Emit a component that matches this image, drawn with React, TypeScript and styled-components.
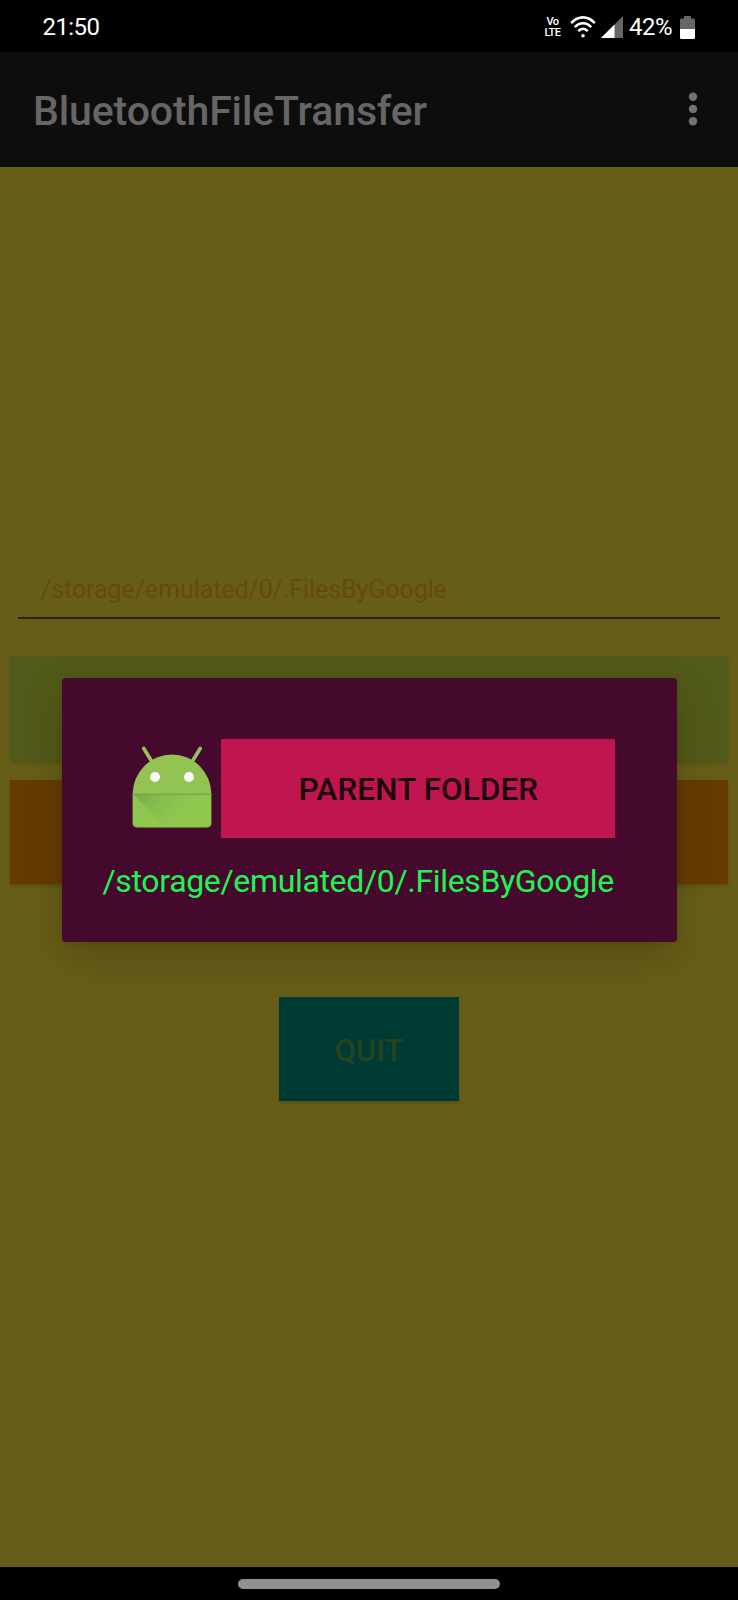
import React from "react";
import styled, { createGlobalStyle } from "styled-components";

const GlobalStyle = createGlobalStyle`
  *, *::before, *::after { box-sizing: border-box; }
  body { margin: 0; background: #000; font-family: Roboto, "Liberation Sans", sans-serif; }
`;

const Screen = styled.div`
  position: relative;
  display: flex;
  flex-direction: column;
  width: 738px;
  height: 1600px;
  overflow: hidden;
  background: #000;
`;

const StatusBar = styled.header`
  display: flex;
  align-items: center;
  justify-content: space-between;
  height: 52px;
  padding: 2px 43px 0 42.5px;
  color: #fff;
  font-size: 24px;
  line-height: 28px;
`;

const Clock = styled.time`
  letter-spacing: -0.6px;
`;

const StatusIcons = styled.div`
  display: flex;
  align-items: center;
`;

const VoLte = styled.div`
  display: flex;
  flex-direction: column;
  align-items: center;
  width: 17px;
  margin-right: 8px;
  font-size: 11px;
  font-weight: 500;
  letter-spacing: -0.5px;
  line-height: 11px;
`;

const Signal = styled.div`
  display: flex;
  margin-left: 4px;
`;

const BatteryLevel = styled.span`
  margin: 0 8px 0 6px;
  letter-spacing: -0.5px;
`;

const AppBar = styled.div`
  display: flex;
  align-items: center;
  justify-content: space-between;
  height: 115px;
  padding: 2px 40px 0 33px;
  background: #0d0d0d;
`;

const Title = styled.h1`
  margin: 0;
  color: #666;
  font-size: 41px;
  font-weight: 500;
  letter-spacing: -0.12px;
  line-height: 48px;
`;

const MenuButton = styled.button`
  display: flex;
  margin: -3px 0 0;
  padding: 0;
  border: 0;
  background: none;
`;

const Content = styled.main`
  display: flex;
  flex-direction: column;
  align-items: center;
  height: 1400px;
  padding: 393px 10px 0;
  background: #665e18;
`;

const PathField = styled.div`
  width: 702px;
  height: 59px;
  padding: 15px 23px 0;
  border-bottom: 2px solid #292609;
  color: #664a08;
  font-size: 25.2px;
  letter-spacing: -0.17px;
  line-height: 30px;
`;

const ActionButton = styled.button<{ $color: string; $top: number; $width: number; $height?: number }>`
  flex: none;
  width: ${(p) => p.$width}px;
  height: ${(p) => p.$height ?? 104}px;
  margin: ${(p) => p.$top}px 0 0;
  padding: 3px 0 0;
  border: 0;
  background: ${(p) => p.$color};
  box-shadow: 0 2px 4px rgba(0, 0, 0, 0.17);
  color: #24441e;
  font: 500 30.75px/36px Roboto, sans-serif;
`;

const Dialog = styled.section`
  position: absolute;
  top: 677.5px;
  left: 61.5px;
  display: flex;
  flex-direction: column;
  width: 615px;
  height: 264px;
  padding: 61.5px 61.5px 0 41px;
  border-radius: 4px;
  background: #45092d;
  box-shadow: 0 16px 40px rgba(0, 0, 0, 0.19), 0 0 6px rgba(0, 0, 0, 0.08);
`;

const FolderRow = styled.div`
  display: flex;
  justify-content: flex-end;
  height: 99px;
`;

const ParentButton = styled.button`
  width: 394px;
  height: 99px;
  margin-left: 9px;
  padding: 3px 0 0 1px;
  border: 0;
  background: #bf1650;
  color: #1c020b;
  font: 500 31.3px/36px Roboto, sans-serif;
  letter-spacing: 0.18px;
`;

const FolderPath = styled.p`
  margin: 25px 0 0;
  color: #1ef552;
  font-size: 32px;
  letter-spacing: -0.34px;
  line-height: 37px;
  white-space: nowrap;
`;

const NavBar = styled.footer`
  display: flex;
  justify-content: center;
  height: 33px;
  padding-top: 12px;
`;

const Handle = styled.div`
  width: 262px;
  height: 10px;
  border-radius: 5px;
  background: #919191;
`;

const WifiIcon = () => (
  <svg width="28" height="24" viewBox="-1 0 28 24" fill="none" stroke="#fff" strokeWidth="2.6">
    <path d="M1.200 8.200C8 .4 18 .4 24.800 8.200M4.800 12.200c4.800-5.200 11.600-5.200 16.400 0M8.300 16.100c2.800-3.100 6.600-3.100 9.400 0" />
    <circle cx="13" cy="20.800" r="1.800" fill="#fff" stroke="none" />
  </svg>
);

const SignalIcon = () => (
  <svg width="22" height="22" viewBox="0 0 22 22">
    <path d="M0 22 22 0v22z" fill="#666" />
    <path d="M0 22 13.500 8.500V22z" fill="#fff" />
  </svg>
);

const BatteryIcon = () => (
  <svg width="15" height="23" viewBox="0 0 15 23">
    <path d="M0 4q0-1.500 1.500-1.500H4V0h7v2.500h2.500Q15 2.500 15 4v9H0z" fill="#666" />
    <path d="M0 13h15v8.500q0 1.500-1.500 1.500h-12Q0 23 0 21.500z" fill="#fff" />
  </svg>
);

const MoreIcon = () => (
  <svg width="10" height="34" viewBox="0 0 10 34" fill="#737373">
    <circle cx="5" cy="4.700" r="4.200" />
    <circle cx="5" cy="17" r="4.200" />
    <circle cx="5" cy="29.300" r="4.200" />
  </svg>
);

const AndroidIcon = () => (
  <svg width="80" height="99" viewBox="0 0 80 99">
    <defs>
      <linearGradient id="bodyShade" x1="8" y1="56" x2="38" y2="86" gradientUnits="userSpaceOnUse">
        <stop stopColor="#4b7334" stopOpacity=".3" />
        <stop offset="1" stopColor="#78ad44" stopOpacity="0" />
      </linearGradient>
    </defs>
    <path d="M11.700 9.300 19.500 22M68.300 9.300 60.500 22" stroke="#97bf5d" strokeWidth="3.600" strokeLinecap="round" />
    <path d="M.6 55.300A39.400 39.800 0 0 1 79.400 55.300z" fill="#92c353" />
    <path d="M.6 55h78.800V84.300q0 4-4 4H4.600q-4 0-4-4z" fill="#8fc74f" />
    <path d="M1 55.300h60L50 88.300H33z" fill="url(#bodyShade)" />
    <path d="M.6 55.300h78.800" stroke="#719d45" strokeWidth="1.100" />
    <path d="M1 85.300q1 3 4 3h70q3 0 4-3" fill="none" stroke="#6d983e" strokeWidth=".8" />
    <circle cx="23" cy="38" r="5" fill="#fafafa" />
    <circle cx="57" cy="38" r="5" fill="#fafafa" />
  </svg>
);

export default function App() {
  return (
    <Screen>
      <GlobalStyle />
      <StatusBar>
        <Clock>21:50</Clock>
        <StatusIcons>
          <VoLte>
            <span>Vo</span>
            <span>LTE</span>
          </VoLte>
          <WifiIcon />
          <Signal>
            <SignalIcon />
          </Signal>
          <BatteryLevel>42%</BatteryLevel>
          <BatteryIcon />
        </StatusIcons>
      </StatusBar>
      <AppBar>
        <Title>BluetoothFileTransfer</Title>
        <MenuButton aria-label="More options">
          <MoreIcon />
        </MenuButton>
      </AppBar>
      <Content>
        <PathField>/storage/emulated/0/.FilesByGoogle</PathField>
        <ActionButton $color="#525a19" $top={37} $width={718} $height={105} />
        <ActionButton $color="#663b00" $top={19} $width={718} />
        <ActionButton $color="#003a34" $top={113} $width={180}>QUIT</ActionButton>
      </Content>
      <NavBar>
        <Handle />
      </NavBar>
      <Dialog role="dialog">
        <FolderRow>
          <AndroidIcon />
          <ParentButton>PARENT FOLDER</ParentButton>
        </FolderRow>
        <FolderPath>/storage/emulated/0/.FilesByGoogle</FolderPath>
      </Dialog>
    </Screen>
  );
}
